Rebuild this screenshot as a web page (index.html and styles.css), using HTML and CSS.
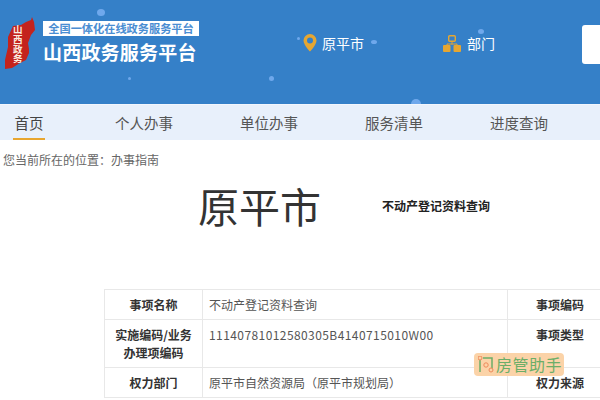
FILE: index.html
```html
<!DOCTYPE html>
<html lang="zh-CN">
<head>
  <meta charset="UTF-8" />
  <title>山西政务服务平台</title>
  <link rel="stylesheet" href="styles.css">
</head>
<body>
  <header class="top">
    <span class="dot" style="left:97px;top:9px;width:8px;height:7px"></span>
    <span class="dot" style="left:128px;top:77px;width:3px;height:3px"></span>
    <span class="dot" style="left:269px;top:76px;width:5px;height:5px"></span>
    <span class="dot" style="left:297px;top:37px;width:3px;height:3px"></span>
    <span class="dot" style="left:371px;top:40px;width:6px;height:4px"></span>
    <span class="dot" style="left:478px;top:29px;width:6px;height:5px"></span>
    <span class="dot" style="left:411px;top:99px;width:10px;height:10px"></span>

    <div class="brand">
      <div class="logo">
        <svg width="33" height="55" viewBox="0 0 33 55">
          <path fill="#c4231d" d="M28 1l2 5 1 8-4 5-3 8 1 6 0 4-3 7-6 3-8 5-7 1 0-9 3-13 0-10 5-11 8-1 5-3 5-2z"/>
        </svg>
        <span class="logo-text">山西政务</span>
      </div>
      <div class="brand-text">
        <div class="brand-sub">全国一体化在线政务服务平台</div>
        <div class="brand-name">山西政务服务平台</div>
      </div>
    </div>

    <div class="top-item loc">
      <svg width="14" height="18" viewBox="0 0 14 18">
        <path fill="#e5a632" fill-rule="evenodd" d="M7 0a6.500 6.500 0 0 1 6.500 6.500C13.500 11 7 17.500 7 17.500S.5 11 .5 6.500A6.500 6.500 0 0 1 7 0zm0 3.500a3 3 0 1 0 0 6 3 3 0 0 0 0-6z"/>
      </svg>
      <span>原平市</span>
    </div>
    <div class="top-item dept">
      <svg width="18" height="17" viewBox="0 0 18 17">
        <rect x="5.700" y=".7" width="6.600" height="5.600" rx="1" fill="none" stroke="#e5a632" stroke-width="1.400"/>
        <path fill="none" stroke="#e5a632" d="M9 6.500v3M4 11V9h10v2"/>
        <rect x="0" y="10" width="7.500" height="7" rx="1" fill="#e5a632"/>
        <rect x="10.500" y="10" width="7.500" height="7" rx="1" fill="#e5a632"/>
      </svg>
      <span>部门</span>
    </div>
    <div class="search-box"></div>
  </header>

  <nav class="nav">
    <a class="nav-item active">首页</a>
    <a class="nav-item">个人办事</a>
    <a class="nav-item">单位办事</a>
    <a class="nav-item">服务清单</a>
    <a class="nav-item">进度查询</a>
  </nav>

  <div class="crumb">您当前所在的位置：办事指南</div>

  <div class="title-row">
    <h1 class="city">原平市</h1>
    <h2 class="item-name">不动产登记资料查询</h2>
  </div>

  <div class="table-wrap">
    <table class="info">
      <tr>
        <th>事项名称</th>
        <td>不动产登记资料查询</td>
        <th class="th-right">事项编码</th>
      </tr>
      <tr class="tall">
        <th>实施编码/业务办理项编码</th>
        <td class="top-cell code">11140781012580305B4140715010W00</td>
        <th class="th-right top-cell">事项类型</th>
      </tr>
      <tr>
        <th>权力部门</th>
        <td>原平市自然资源局（原平市规划局）</td>
        <th class="th-right">权力来源</th>
      </tr>
    </table>
  </div>

  <div class="watermark">
    <svg width="16" height="17" viewBox="0 0 16 17">
      <path fill="none" stroke="#6cae68" stroke-width="1.500" d="M2 3v13M5 2h9v13"/>
      <circle cx="8" cy="9" r="2.200" fill="none" stroke="#ee8a5a"/>
      <circle cx="2" cy="2" r="2" fill="#fbd3a8" stroke="#ee8a5a"/>
      <circle cx="13" cy="14" r="2" fill="#fbd3a8" stroke="#ee8a5a"/>
    </svg>
    <span>房管助手</span>
  </div>
</body>
</html>
```

FILE: styles.css
```css
* {
  box-sizing: border-box;
}
body {
  margin: 0;
  width: 600px;
  height: 400px;
  overflow: hidden;
  position: relative;
  font-family: "Noto Sans CJK SC", "Liberation Sans", sans-serif;
  background: #fff;
  color: #333;
}

/* Header */
.top {
  position: relative;
  height: 104px;
  background: #3580c8;
  display: flex;
  align-items: flex-start;
  overflow: hidden;
}
.dot {
  position: absolute;
  background: #6fa8ec;
  border-radius: 50%;
}
.brand {
  display: flex;
  width: 303px;
  padding: 16px 0 0 4px;
}
.logo {
  position: relative;
  width: 36px;
  height: 55px;
  flex: none;
}
.logo svg {
  display: block;
}
.logo-text {
  position: absolute;
  left: 9px;
  top: 9px;
  width: 10px;
  font-size: 9.500px;
  line-height: 9.800px;
  font-weight: 700;
  color: #fbeee0;
}
.brand-text {
  margin-left: 3px;
}
.brand-sub {
  width: 156px;
  height: 15px;
  margin-top: 5px;
  background: #fff;
  color: #4a8dd2;
  font-size: 11.200px;
  font-weight: 700;
  line-height: 15px;
  text-align: center;
  white-space: nowrap;
}
.brand-name {
  margin-top: 2px;
  color: #fff;
  font-size: 19px;
  font-weight: 700;
  line-height: 28px;
  letter-spacing: .2px;
  white-space: nowrap;
}
.top-item {
  display: flex;
  align-items: center;
  color: #fff;
  font-size: 14px;
  line-height: 20px;
  margin-top: 33px;
}
.loc {
  width: 140px;
  gap: 5px;
}
.dept {
  width: 140px;
  gap: 6px;
}
.search-box {
  position: absolute;
  left: 582px;
  top: 25px;
  width: 40px;
  height: 39px;
  background: #fff;
  border-radius: 3px;
}

/* Nav */
.nav {
  height: 36px;
  background: #e8f0fb;
  border-top: 1px solid #f2f6fd;
  display: flex;
  padding-left: 13px;
  gap: 67px;
}
.nav-item {
  height: 35px;
  font-size: 14.500px;
  line-height: 35px;
  color: #555;
  white-space: nowrap;
}
.nav-item.active {
  color: #444;
  width: 32px;
  text-align: center;
  border-bottom: 2px solid #e8a62f;
  margin-right: 3px;
}

/* Breadcrumb and title */
.crumb {
  margin-top: 11px;
  padding-left: 3px;
  font-size: 12px;
  line-height: 18px;
  color: #666;
}
.title-row {
  display: flex;
  height: 58px;
  margin-top: 7px;
  padding-left: 198px;
}
.city {
  margin: 0;
  width: 184px;
  font-size: 41px;
  font-weight: 400;
  line-height: 58px;
  color: #333;
}
.item-name {
  margin: 0;
  font-size: 12px;
  font-weight: 700;
  line-height: 18px;
  padding-top: 21px;
  color: #222;
}

/* Info table */
.table-wrap {
  margin: 55px 0 0 104px;
  width: 496px;
  overflow: hidden;
}
.info {
  width: 560px;
  table-layout: fixed;
  border-collapse: collapse;
  font-size: 12px;
  line-height: 18px;
  color: #555;
}
.info th, .info td {
  border: 1px solid #e8e8e8;
  height: 30px;
  padding: 0 6px;
}
.info tr.tall th, .info tr.tall td {
  height: 48px;
}
.info th {
  width: 98px;
  font-weight: 700;
  color: #333;
  text-align: center;
}
.info td {
  width: 305px;
}
.info .th-right {
  width: 157px;
  text-align: left;
  padding-left: 28px;
}
.info .top-cell {
  vertical-align: top;
  padding-top: 6px;
}
.info .code {
  letter-spacing: .42px;
}

/* Watermark */
.watermark {
  position: absolute;
  left: 474px;
  top: 353px;
  width: 90px;
  height: 23px;
  border-radius: 4px;
  background: #fbd3a8;
  color: #6cae68;
  font-size: 16px;
  line-height: 23px;
  padding: 3px 0 0 4px;
  white-space: nowrap;
  display: flex;
  gap: 2px;
}
.watermark span {
  margin-top: -3px;
  letter-spacing: .5px;
}
```
